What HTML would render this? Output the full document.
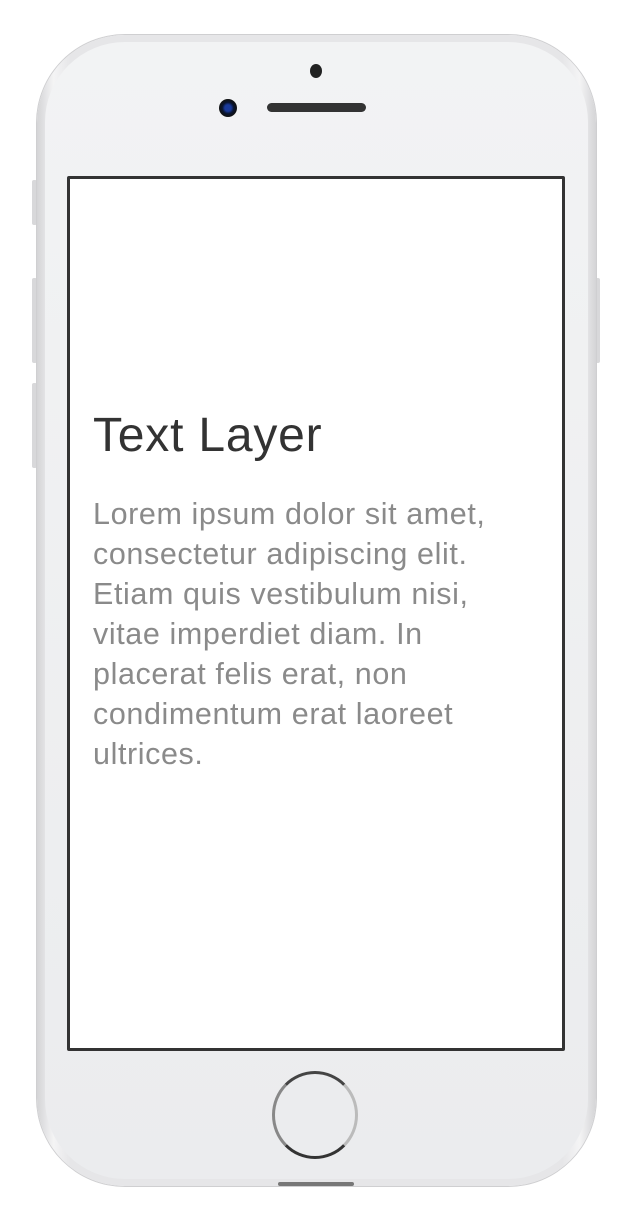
<!DOCTYPE html>
<html><head><meta charset="utf-8"><style>
html,body{margin:0;padding:0;background:#fff;width:636px;height:1230px;overflow:hidden;position:relative;font-family:"Liberation Sans",sans-serif}
.a{position:absolute}
.body{left:37px;top:35px;width:559px;height:1151px;border-radius:88px;background:linear-gradient(90deg,#d4d4d6,#f4f4f5 3%,#e6e6e8 6%,#e6e6e8 94%,#f4f4f5 97%,#d4d4d6);box-shadow:0 0 0 1px #cfcfd1}
.face{left:45px;top:42px;width:543px;height:1137px;border-radius:80px;background:linear-gradient(#f2f3f4,#ebecee)}
.screen{left:67px;top:176px;width:492px;height:869px;border:3px solid #333;border-radius:2px;background:#fff}
.btn{background:#d8d8da;border-radius:2px;width:5px}
h1{position:absolute;left:93px;top:408px;margin:0;font-weight:normal;font-size:48px;letter-spacing:0.8px;color:#333;line-height:56px}
p{position:absolute;left:93px;top:494px;margin:0;white-space:nowrap;font-size:30.5px;letter-spacing:0.6px;line-height:40px;color:#8a8a8a}
</style></head><body>
<div class="a btn" style="left:32px;top:180px;height:45px"></div>
<div class="a btn" style="left:32px;top:278px;height:85px"></div>
<div class="a btn" style="left:32px;top:383px;height:85px"></div>
<div class="a btn" style="left:595px;top:278px;height:85px"></div>
<div class="a" style="left:36px;top:125px;width:6px;height:16px;background:#aaa"></div>
<div class="a" style="left:590px;top:125px;width:6px;height:16px;background:#aaa"></div>
<div class="a" style="left:36px;top:1078px;width:6px;height:16px;background:#aaa"></div>
<div class="a" style="left:590px;top:1078px;width:6px;height:16px;background:#aaa"></div>
<div class="a body"></div>
<div class="a face"></div>
<div class="a" style="left:278px;top:1182px;width:76px;height:4px;background:#777;border-radius:2px"></div>
<div class="a" style="left:310px;top:64px;width:12px;height:14px;border-radius:50%;background:#222"></div>
<div class="a" style="left:219px;top:99px;width:18px;height:18px;border-radius:50%;background:radial-gradient(circle,#1a3a9a 0 25%,#0a1530 45%,#111 70%,#555)"></div>
<div class="a" style="left:267px;top:103px;width:99px;height:9px;border-radius:5px;background:#333"></div>
<div class="a screen"></div>
<div class="a" style="left:272px;top:1071px;width:86px;height:88px;border-radius:50%;box-sizing:border-box;border:3px solid #666;border-top-color:#444;border-bottom-color:#333;border-left-color:#888;border-right-color:#bbb;background:#ebecee"></div>
<h1>Text Layer</h1>
<p>Lorem ipsum dolor sit amet,<br>consectetur adipiscing elit.<br>Etiam quis vestibulum nisi,<br>vitae imperdiet diam. In<br>placerat felis erat, non<br>condimentum erat laoreet<br>ultrices.</p>
</body></html>
